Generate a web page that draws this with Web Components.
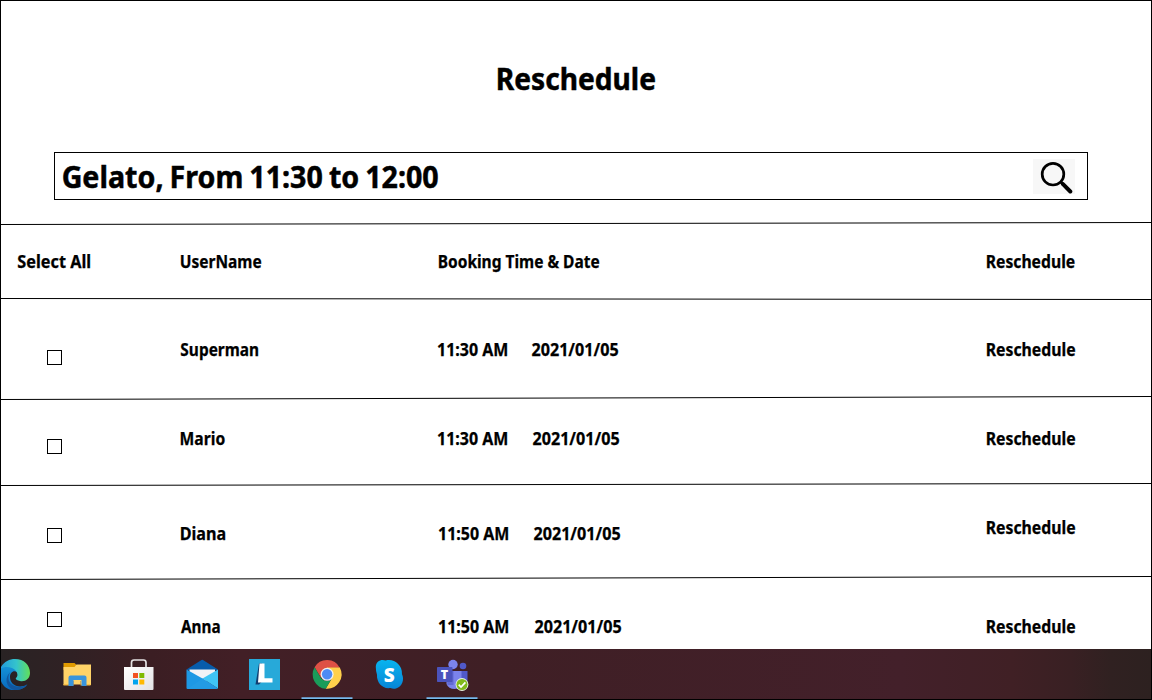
<!DOCTYPE html>
<html lang="en">
<head>
<meta charset="utf-8">
<title>Reschedule</title>
<style>
html,body{margin:0;padding:0;background:#fff;overflow:hidden}
body{font-family:"Noto Sans","Open Sans",sans-serif;color:#000}
</style>
</head>
<body>
<reschedule-page></reschedule-page>
<script>
const define = (name, cls) => customElements.define(name, cls);
const ctx = document.createElement('canvas').getContext('2d');

// A bold label whose glyphs are condensed to fill the given width.
define('fit-text', class extends HTMLElement {
  connectedCallback() {
    const size = +this.getAttribute('size') || 17;
    const width = +this.getAttribute('w');
    const text = this.textContent;
    // Measured at ten times the size, for sub-pixel bearings.
    ctx.font = `700 ${size * 10}px "Noto Sans","Open Sans",sans-serif`;
    const m = ctx.measureText(text);
    const gap = size > 20 ? -1.5 : 0;
    const spaces = text.split(' ').length - 1;
    const scale = width / ((m.actualBoundingBoxRight + m.actualBoundingBoxLeft) / 10 + gap * spaces);
    const shift = m.actualBoundingBoxLeft / 10 * scale;
    this.attachShadow({mode: 'open'}).innerHTML = `<style>
      :host{display:block;width:${width}px;height:${size > 20 ? 36 : 20}px;line-height:${size > 20 ? 36 : 20}px;font-size:${size}px;font-weight:700;white-space:nowrap;flex:none}
      span{display:inline-block;word-spacing:${gap}px;-webkit-text-stroke:${size > 20 ? .5 : .25}px #000;transform-origin:0 0;transform:translateX(${shift}px) scaleX(${scale})}
    </style><span><slot></slot></span>`;
  }
});

define('rule-line', class extends HTMLElement {
  connectedCallback() {
    const a = this.getAttribute('from'), b = this.getAttribute('to');
    this.attachShadow({mode: 'open'}).innerHTML = `<style>:host{display:block;height:4px}svg{display:block}</style>
    <svg width="1150" height="4" viewBox="0 0 1150 4"><path d="M0 ${a}L1150 ${b}" stroke="#000"/></svg>`;
  }
});

define('check-box', class extends HTMLElement {
  connectedCallback() {
    this.attachShadow({mode: 'open'}).innerHTML = `<style>:host{display:block;box-sizing:border-box;width:15px;height:15px;border:1px solid #000;background:#fff}</style>`;
  }
});

define('search-bar', class extends HTMLElement {
  connectedCallback() {
    this.attachShadow({mode: 'open'}).innerHTML = `<style>
      :host{display:flex;box-sizing:border-box;width:1034px;height:48px;border:1px solid #000;padding:5px 12px 0 8px;justify-content:space-between;align-items:flex-start}
      svg{display:block;margin-top:1px}
    </style><slot></slot>
    <svg width="42" height="35" viewBox="0 0 42 35"><path fill="#f7f7f7" d="M0 0h42v35H0z"/><circle cx="20" cy="15.2" r="10.8" fill="none" stroke="#000" stroke-width="2.7"/><path d="M28 23.2l2 2" stroke="#000" stroke-width="3"/><path d="M30 25.2l7.300 7.300" stroke="#000" stroke-width="4" stroke-linecap="round"/></svg>`;
  }
});

define('booking-row', class extends HTMLElement {
  connectedCallback() {
    this.attachShadow({mode: 'open'}).innerHTML = `<style>
      :host{display:grid;box-sizing:border-box;height:var(--h);grid-template-columns:179px 258px 548px 1fr;align-items:start}
      div{padding-top:var(--t)}
      .sel{padding-top:var(--c,var(--t));padding-left:var(--cx,46px)}
      .user{padding-left:.5px}
      .time{display:flex;gap:25px;padding-left:var(--tx,.5px)}
      .act{padding-top:var(--r,var(--t));padding-left:.5px}
    </style>
    <div class="sel"><slot name="select"></slot></div>
    <div class="user"><slot name="user"></slot></div>
    <div class="time"><slot name="time"></slot></div>
    <div class="act"><slot name="action"></slot></div>`;
  }
});

const ICONS = {
edge:`<defs><linearGradient id="a" x1="0" x2="1"><stop offset="0" stop-color="#2299dc"/><stop offset=".55" stop-color="#34c4cc"/><stop offset="1" stop-color="#62df59"/></linearGradient><linearGradient id="b" x1="0" y1="0" x2="0" y2="1"><stop stop-color="#1695d8"/><stop offset="1" stop-color="#0868bd"/></linearGradient></defs>
 <path fill="url(#b)" d="M0 668c5-5 15-4 17 4-4-2-7 1-7 5 0 7 7 12 17 8-3 4-8 5-13 5-9 0-14-7-14-15z"/>
 <path fill="#12569d" d="M10.500 672c-4 5-2 12 4 14 5 2 9 1 13-2-3 5-9 6-13 6-8-2-11-12-4-18z"/>
 <path fill="url(#a)" d="M0 669c3-7 9-10 15-10 9 0 15 6 15 14 0 6-5 9-10 8-3-.5-5-2-4-3 3-3 1-8-4-10-5-2-9-1-12 1z"/>`,
folder:`<path fill="#e09a00" d="M63 663h11l2 2h14v5H63z"/><path fill="#ffd368" d="M63 667h11l2-2.500h14.500V685H63z"/><path fill="#f6bd45" d="M63 684h27v1.500H63z"/><path fill="#3b2024" d="M73 681h7v5h-7z"/><path fill="#ffd368" d="M73 680h7v4.500h-7z"/><path fill="#3994dc" d="M68 677.500q0-2 2-2h14q2 0 2 2v8.500h-5v-6h-8v6h-5z"/>`,
store:`<defs><linearGradient id="c" x1="0" x2="1" y2="1"><stop stop-color="#fff"/><stop offset="1" stop-color="#e2e2e4"/></linearGradient></defs><path d="M131.500 670v-7.500q0-2.500 2.500-2.500h9.500q2.500 0 2.500 2.500v7.500" fill="none" stroke="#e5e2e3" stroke-width="1.700"/><path fill="url(#c)" d="M124 667h29.500v22q0 1-1 1H125q-1 0-1-1z"/><path fill="#f25022" d="M133 673h5v5h-5z"/><path fill="#7fba00" d="M139.300 673h5v5h-5z"/><path fill="#00a4ef" d="M133 679.500h5v5h-5z"/><path fill="#ffb900" d="M139.300 679.500h5v5h-5z"/>`,
mail:`<path fill="#075cab" d="M186 669.500l15-9.500q.7-.4 1.500 0l15 9.500-15 6z"/><path fill="#f3f3f6" d="M189 669.500h25.500v5l-12 8-13.500-7z"/><path fill="#1e98e4" d="M186 669.500l16 9 15.500 10.500H187q-1 0-1-1z"/><path fill="#40c5f5" d="M217.500 669.500v19L202 678.500z"/><path fill="#239be4" d="M202 678.500l15.500 10h-30z"/>`,
lapp:`<path fill="#27a9d9" d="M249 659h31v31h-31z"/><path fill="#123e70" d="M259 663.500l-3.500 21h3.500l3-3v-18z"/><path fill="#fff" d="M259.500 663.500h5v14.700h8v4.300H258z"/>`,
chrome:`<path fill="#de5145" d="M314.100 667.200a14.400 14.400 0 0 1 25.200.5L326.500 668l-6 9.800z"/><path fill="#ffd04b" d="M326.500 667.500h12.800a14.400 14.400 0 0 1-14.100 21.200l6.500-11z"/><path fill="#1a9c5a" d="M314.100 667.200l6.600 11.200q4.800 4.400 9.700 1.500l-5.200 8.900A14.400 14.400 0 0 1 314.100 667.200z"/><circle cx="326.600" cy="674.300" r="6.500" fill="#f1f1f1"/><circle cx="326.600" cy="674.300" r="5.200" fill="#4d8bf4"/>`,
skype:`<defs><linearGradient id="d" x1="0" x2="0" y1="0" y2="1"><stop stop-color="#08b4ef"/><stop offset="1" stop-color="#0785d6"/></linearGradient></defs><path fill="url(#d)" d="M375.800 667c0-6 5.500-8.300 10-6.500 8-2 16.500 4 16.200 13.800 2.500 5 .5 12.500-6 14.300-2 .5-4 .2-5.500-.5-8 1.300-14-5.500-13.500-13.300q-1.200-4-1.200-7.800z"/><text x="389.200" y="681.500" text-anchor="middle" font-family="Open Sans" font-weight="800" font-size="19" fill="#fff">S</text>`,
teams:`<circle cx="452.500" cy="664.500" r="4.700" fill="#7b83eb"/><circle cx="462.500" cy="666" r="3.300" fill="#5059c9"/><path fill="#5059c9" d="M459 671h8v10q-1 5-8 5z"/><path fill="#7b83eb" d="M446 671h15v10q0 8-7 8-6 0-8-5z"/><path fill="#626bd5" d="M446 671h7v14h-6z"/><rect x="436.500" y="667" width="15.500" height="15" rx=".7" fill="#4b53bc"/><text x="444" y="679" text-anchor="middle" font-family="Open Sans" font-weight="800" font-size="12.500" fill="#fff">T</text><circle cx="461.500" cy="684.500" r="6.400" fill="#e9f4df"/><circle cx="461.500" cy="684.500" r="5.500" fill="#81b91b"/><path d="M458.200 684.700l2.300 2.300 4.400-4.600" fill="none" stroke="#fff" stroke-width="1.700"/>`
};

define('task-icon', class extends HTMLElement {
  connectedCallback() {
    const slotLeft = -11 + 62.5 * [...this.parentNode.children].filter(e => e.localName === 'task-icon').indexOf(this);
    const x = this.hasAttribute('active') ? Math.floor(slotLeft) : 0;
    const bar = x ? `<path fill="#76b9ed" d="M${x} 697.300h51v1.700H${x}z"/>` : '';
    this.attachShadow({mode: 'open'}).innerHTML = `<style>:host{display:block;width:50px;height:50px;flex:none}svg{display:block;overflow:visible}</style>
    <svg width="50" height="50" viewBox="${slotLeft} 649 50 50">${ICONS[this.getAttribute('name')]}${bar}</svg>`;
  }
});

define('task-bar', class extends HTMLElement {
  connectedCallback() {
    this.attachShadow({mode: 'open'}).innerHTML = `<style>
      :host{display:flex;gap:12.5px;box-sizing:border-box;height:50px;padding:0;overflow:hidden;background:linear-gradient(90deg,#292324 0,#302124 70px,#3b1e23 150px,#421f26 240px,#3f1f25 500px,#43202a 900px,#402025 1010px,#392023 1070px,#302121 1110px,#2d2120)}
      ::slotted(:first-child){margin-left:-12px}
    </style><slot></slot>`;
  }
});

define('reschedule-page', class extends HTMLElement {
  connectedCallback() {
    const row = (h, t, c, r, user, uw, time, tx, dateGap) => `
      <booking-row style="--h:${h}px;--t:${t}px;--c:${c}px;--r:${r}px;--tx:${tx}px">
        <check-box slot="select"></check-box>
        <fit-text slot="user" w="${uw}">${user}</fit-text>
        <fit-text slot="time" w="69">${time}</fit-text>
        <fit-text slot="time" w="86" style="margin-left:${dateGap}px">2021/01/05</fit-text>
        <fit-text slot="action" w="88">Reschedule</fit-text>
      </booking-row>`;
    this.attachShadow({mode: 'open'}).innerHTML = `<style>
      :host{display:flex;flex-direction:column;box-sizing:border-box;width:1152px;height:700px;border:1px solid #000;background:#fff}
      header{display:flex;flex-direction:column;height:221px;box-sizing:border-box;padding-top:59px}
      header>fit-text{margin-left:496.5px}
      search-bar{margin:56px 0 0 53px}
    </style>
    <header><fit-text size="31" w="157">Reschedule</fit-text>
      <search-bar><fit-text size="31" w="375">Gelato, From 11:30 to 12:00</fit-text></search-bar></header>
    <rule-line from="2.5" to=".5"></rule-line>
    <booking-row style="--h:72px;--t:26px;--cx:17px">
      <fit-text slot="select" w="72">Select All</fit-text>
      <fit-text slot="user" w="80">UserName</fit-text>
      <fit-text slot="time" w="160">Booking Time &amp; Date</fit-text>
      <fit-text slot="action" w="87.5">Reschedule</fit-text>
    </booking-row>
    <rule-line from=".5" to="1.5"></rule-line>
    ${row(94, 38, 48, 38, 'Superman', 77, '11:30 AM', .2, -.3)}
    <rule-line from="3.5" to=".5"></rule-line>
    ${row(83, 29, 39, 29, 'Mario', 43.5, '11:30 AM', .2, .7)}
    <rule-line from="2.5" to=".5"></rule-line>
    ${row(89, 37, 41, 31, 'Diana', 44, '11:50 AM', 1.2, .7)}
    <rule-line from="3.5" to=".5"></rule-line>
    ${row(69, 37, 32, 37, 'Anna', 38.5, '11:50 AM', 1.2, 1.7)}
    <task-bar>
      <task-icon name="edge"></task-icon><task-icon name="folder"></task-icon><task-icon name="store"></task-icon><task-icon name="mail"></task-icon><task-icon name="lapp"></task-icon><task-icon name="chrome" active></task-icon><task-icon name="skype"></task-icon><task-icon name="teams" active></task-icon>
    </task-bar>`;
  }
});
</script>
</body>
</html>
